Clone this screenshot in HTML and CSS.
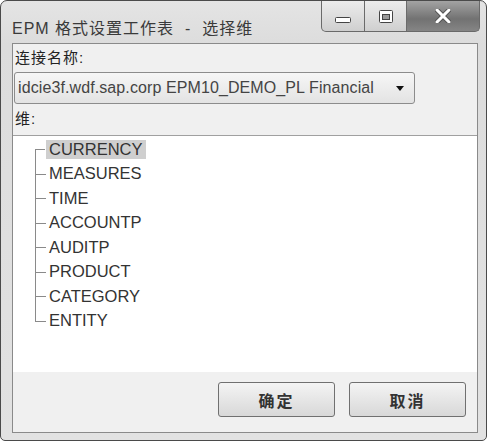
FILE: index.html
```html
<!DOCTYPE html>
<html lang="zh-CN">
<head>
  <meta charset="UTF-8">
  <title>EPM 格式设置工作表 - 选择维</title>
  <link rel="stylesheet" href="styles.css">
</head>
<body>
  <div class="window">
    <div class="titlebar">
      <div class="title">EPM 格式设置工作表 &nbsp;-&nbsp; 选择维</div>
      <div class="caption">
        <div class="cap-btn cap-min">
          <svg width="16" height="6" viewBox="0 0 16 6"><rect x="0.5" y="0.5" width="15" height="5" rx="1" fill="#fff" stroke="#444"/></svg>
        </div>
        <div class="cap-btn cap-max">
          <svg width="14" height="13" viewBox="0 0 14 13"><rect x="0.5" y="0.5" width="13" height="12" rx="1" fill="#fff" stroke="#444"/><rect x="3.5" y="4.5" width="7" height="5" fill="#9a9a9a" stroke="#444"/></svg>
        </div>
        <div class="cap-btn cap-close">
          <svg width="16" height="14" viewBox="0 0 16 14"><path d="M2 1 L14 13 M14 1 L2 13" stroke="#555" stroke-width="5" stroke-linecap="round"/><path d="M2 1 L14 13 M14 1 L2 13" stroke="#fff" stroke-width="3" stroke-linecap="round"/></svg>
        </div>
      </div>
    </div>

    <div class="client">
      <div class="field-label">连接名称:</div>
      <div class="combo">
        <span class="combo-text">idcie3f.wdf.sap.corp EPM10_DEMO_PL Financial</span>
        <span class="combo-arrow"></span>
      </div>

      <div class="field-label field-label-dim">维:</div>
      <div class="tree">
        <ul class="tree-list">
          <li class="tree-item"><span class="tree-label selected">CURRENCY</span></li>
          <li class="tree-item"><span class="tree-label">MEASURES</span></li>
          <li class="tree-item"><span class="tree-label">TIME</span></li>
          <li class="tree-item"><span class="tree-label">ACCOUNTP</span></li>
          <li class="tree-item"><span class="tree-label">AUDITP</span></li>
          <li class="tree-item"><span class="tree-label">PRODUCT</span></li>
          <li class="tree-item"><span class="tree-label">CATEGORY</span></li>
          <li class="tree-item"><span class="tree-label">ENTITY</span></li>
        </ul>
      </div>

      <div class="footer">
        <button class="btn">确定</button>
        <button class="btn">取消</button>
      </div>
    </div>
  </div>
</body>
</html>
```

FILE: styles.css
```css
* {
  margin: 0;
  padding: 0;
  box-sizing: border-box;
}

body {
  font-family: "Liberation Sans", "Noto Sans CJK SC", sans-serif;
  background-color: #fff;
  color: #333;
}

.window {
  width: 487px;
  height: 441px;
  border: 1px solid #4a4a4a;
  border-radius: 7px 7px 5px 5px;
  background: linear-gradient(180deg, #e4e4e4 0%, #dcdcdc 10%, #e2e2e2 100%);
  padding: 0 8px 7px 11px;
  display: flex;
  flex-direction: column;
}

.titlebar {
  height: 42px;
  display: flex;
  align-items: flex-start;
}

.title {
  padding-top: 14px;
  font-size: 16px;
  letter-spacing: 1px;
  color: #3a3a3a;
  white-space: nowrap;
}

.caption {
  margin-left: auto;
  margin-right: -2px;
  display: flex;
  height: 31px;
}

.cap-btn {
  height: 31px;
  display: flex;
  align-items: center;
  justify-content: center;
  border: 1px solid #6a6a6a;
  border-top: none;
}

.cap-min {
  width: 44px;
  border-radius: 0 0 0 5px;
  background: linear-gradient(180deg, #ececec, #cfcfcf);
  padding-top: 8px;
}

.cap-max {
  width: 42px;
  border-left: none;
  background: linear-gradient(180deg, #ececec, #cfcfcf);
}

.cap-close {
  width: 73px;
  border-left: none;
  border-radius: 0 0 5px 0;
  background: linear-gradient(180deg, #a3a3a3, #727272 60%, #858585);
}

.client {
  flex: 1;
  border: 1px solid #8a8a8a;
  background-color: #f0f0f0;
  display: flex;
  flex-direction: column;
}

.field-label {
  padding: 5px 0 0 2px;
  height: 28px;
  font-size: 15px;
  line-height: 18px;
  letter-spacing: 1px;
  color: #222;
}

.combo {
  margin-left: 1px;
  width: 401px;
  height: 32px;
  border: 1px solid #8c8c8c;
  border-radius: 3px;
  background: linear-gradient(180deg, #f6f6f6, #e3e3e3);
  display: flex;
  align-items: center;
  padding: 0 10px 0 3px;
}

.combo-text {
  flex: 1;
  white-space: nowrap;
  font-size: 16px;
  letter-spacing: 0.1px;
  color: #444;
}

.combo-arrow {
  width: 0;
  height: 0;
  border-left: 4px solid transparent;
  border-right: 4px solid transparent;
  border-top: 5px solid #111;
  margin-left: 8px;
}

.field-label-dim {
  padding-top: 6px;
  height: 31px;
}

.tree {
  flex: 1;
  background-color: #fff;
  border-top: 1px solid #a0a0a0;
  padding: 1px 0 0 22px;
}

.tree-list {
  list-style: none;
}

.tree-item {
  position: relative;
  height: 24.5px;
  display: flex;
  align-items: center;
  padding-left: 11px;
}

.tree-item::before {
  content: "";
  position: absolute;
  left: 0;
  top: 0;
  width: 10px;
  height: 50%;
  border-left: 1px solid #8a8a8a;
  border-bottom: 1px solid #8a8a8a;
}

.tree-item:first-child::before {
  border-left: none;
}

.tree-item::after {
  content: "";
  position: absolute;
  left: 0;
  top: 50%;
  bottom: 0;
  border-left: 1px solid #8a8a8a;
}

.tree-item:last-child::after {
  display: none;
}

.tree-label {
  font-size: 16.5px;
  line-height: 19px;
  padding: 0 3px;
  color: #333;
}

.tree-label.selected {
  background-color: #cfcfcf;
}

.footer {
  height: 60px;
  display: flex;
  justify-content: flex-end;
  gap: 14px;
  padding: 10px 11px 0 0;
}

.btn {
  width: 117px;
  height: 35px;
  border: 1px solid #707070;
  border-radius: 3px;
  background: linear-gradient(180deg, #f4f4f4, #e6e6e6 50%, #d8d8d8);
  font-family: "Noto Sans CJK SC", sans-serif;
  font-size: 16px;
  font-weight: bold;
  letter-spacing: 2px;
  color: #333;
}
```
